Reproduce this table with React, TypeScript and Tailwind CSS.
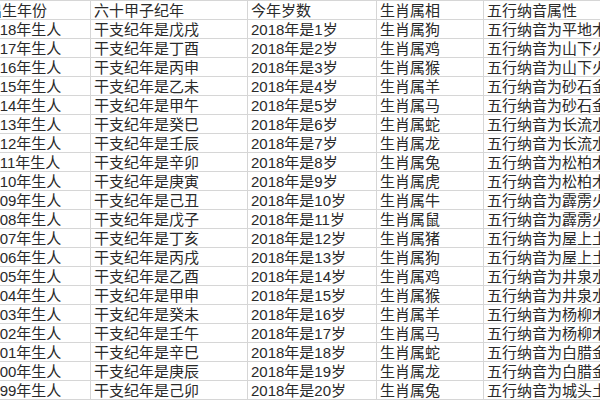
import React from "react";

const rows: [string, string, string, string, string][] = [
  ["出生年份", "六十甲子纪年", "今年岁数", "生肖属相", "五行纳音属性"],
  ["2018年生人", "干支纪年是戊戌", "2018年是1岁", "生肖属狗", "五行纳音为平地木"],
  ["2017年生人", "干支纪年是丁酉", "2018年是2岁", "生肖属鸡", "五行纳音为山下火"],
  ["2016年生人", "干支纪年是丙申", "2018年是3岁", "生肖属猴", "五行纳音为山下火"],
  ["2015年生人", "干支纪年是乙未", "2018年是4岁", "生肖属羊", "五行纳音为砂石金"],
  ["2014年生人", "干支纪年是甲午", "2018年是5岁", "生肖属马", "五行纳音为砂石金"],
  ["2013年生人", "干支纪年是癸巳", "2018年是6岁", "生肖属蛇", "五行纳音为长流水"],
  ["2012年生人", "干支纪年是壬辰", "2018年是7岁", "生肖属龙", "五行纳音为长流水"],
  ["2011年生人", "干支纪年是辛卯", "2018年是8岁", "生肖属兔", "五行纳音为松柏木"],
  ["2010年生人", "干支纪年是庚寅", "2018年是9岁", "生肖属虎", "五行纳音为松柏木"],
  ["2009年生人", "干支纪年是己丑", "2018年是10岁", "生肖属牛", "五行纳音为霹雳火"],
  ["2008年生人", "干支纪年是戊子", "2018年是11岁", "生肖属鼠", "五行纳音为霹雳火"],
  ["2007年生人", "干支纪年是丁亥", "2018年是12岁", "生肖属猪", "五行纳音为屋上土"],
  ["2006年生人", "干支纪年是丙戌", "2018年是13岁", "生肖属狗", "五行纳音为屋上土"],
  ["2005年生人", "干支纪年是乙酉", "2018年是14岁", "生肖属鸡", "五行纳音为井泉水"],
  ["2004年生人", "干支纪年是甲申", "2018年是15岁", "生肖属猴", "五行纳音为井泉水"],
  ["2003年生人", "干支纪年是癸未", "2018年是16岁", "生肖属羊", "五行纳音为杨柳木"],
  ["2002年生人", "干支纪年是壬午", "2018年是17岁", "生肖属马", "五行纳音为杨柳木"],
  ["2001年生人", "干支纪年是辛巳", "2018年是18岁", "生肖属蛇", "五行纳音为白腊金"],
  ["2000年生人", "干支纪年是庚辰", "2018年是19岁", "生肖属龙", "五行纳音为白腊金"],
  ["1999年生人", "干支纪年是己卯", "2018年是20岁", "生肖属兔", "五行纳音为城头土"],
];

export default function App() {
  return (
    <div className="w-[600px] h-[400px] overflow-hidden bg-white">
      <div
        className="ml-[-20px] w-[700px] border-t border-[#d6d6d6] text-[15px] text-[#2a2a2a] leading-[18px]"
        style={{ fontFamily: '"Liberation Sans", "Noto Sans CJK SC", sans-serif' }}
      >
        {rows.map((r, i) => (
          <div
            key={i}
            className="grid grid-cols-[111px_157px_129px_107px_196px] h-[19px] border-b border-[#d6d6d6]"
          >
            {r.map((c, j) => (
              <div
                key={j}
                className={
                  "border-r border-[#d6d6d6] whitespace-nowrap overflow-hidden pt-[1px] " +
                  (j === 0 ? (i === 0 ? "pl-[7px]" : "pl-[3px]") : "pl-[3px]")
                }
              >
                {c}
              </div>
            ))}
          </div>
        ))}
      </div>
    </div>
  );
}
